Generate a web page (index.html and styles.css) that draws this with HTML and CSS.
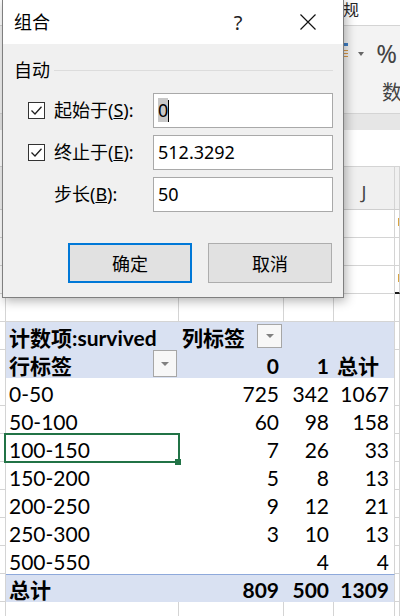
FILE: index.html
```html
<!DOCTYPE html>
<html lang="zh-CN">
<head>
<meta charset="utf-8">
<title>组合</title>
<link rel="stylesheet" href="styles.css">
</head>
<body>
<div class="app">
  <div class="numfmt-bar"><span class="numfmt">常规</span></div>
  <div class="ribbon">
    <div class="tools">
      <span class="acc-icon"></span>
      <span class="drop-arrow"></span>
      <span class="pct">%</span>
    </div>
    <div class="group-label">数字</div>
  </div>
  <div class="ribbon-gap"></div>
  <div class="fbar"></div>
  <div class="colheads">
    <div class="ch"></div><div class="ch"></div><div class="ch"></div><div class="ch"></div><div class="ch">J</div><div class="ch"></div>
  </div>

  <div class="sheet">
    <div class="row"><div class="c"></div><div class="c"></div><div class="c"></div><div class="c"></div><div class="c"></div><div class="c"><span class="om"></span></div></div>
    <div class="row"><div class="c"></div><div class="c"></div><div class="c"></div><div class="c"></div><div class="c"></div><div class="c"></div></div>
    <div class="row"><div class="c"></div><div class="c"></div><div class="c"></div><div class="c"></div><div class="c"></div><div class="c thick"><span class="om"></span></div></div>
    <div class="row"><div class="c"></div><div class="c"></div><div class="c"></div><div class="c"></div><div class="c"></div><div class="c"></div></div>

    <div class="row">
      <div class="c"></div>
      <div class="p blue b">计数项:survived</div>
      <div class="p blue b flt"><span>列标签</span><span class="fb"></span></div>
      <div class="p blue"></div>
      <div class="p blue d"></div>
      <div class="c"></div>
    </div>
    <div class="row">
      <div class="c"></div>
      <div class="p blue b hb flt"><span>行标签</span><span class="fb tall"></span></div>
      <div class="p blue b hb num">0</div>
      <div class="p blue b hb num">1</div>
      <div class="p blue b hb d">总计</div>
      <div class="c"></div>
    </div>
    <div class="row"><div class="c"></div><div class="p">0-50</div><div class="p num">725</div><div class="p num">342</div><div class="p num d">1067</div><div class="c"></div></div>
    <div class="row"><div class="c"></div><div class="p">50-100</div><div class="p num">60</div><div class="p num">98</div><div class="p num d">158</div><div class="c"></div></div>
    <div class="row"><div class="c"></div><div class="p sel">100-150</div><div class="p num">7</div><div class="p num">26</div><div class="p num d">33</div><div class="c"></div></div>
    <div class="row"><div class="c"></div><div class="p">150-200</div><div class="p num">5</div><div class="p num">8</div><div class="p num d">13</div><div class="c"></div></div>
    <div class="row"><div class="c"></div><div class="p">200-250</div><div class="p num">9</div><div class="p num">12</div><div class="p num d">21</div><div class="c"></div></div>
    <div class="row"><div class="c"></div><div class="p">250-300</div><div class="p num">3</div><div class="p num">10</div><div class="p num d">13</div><div class="c"></div></div>
    <div class="row"><div class="c"></div><div class="p">500-550</div><div class="p num"></div><div class="p num">4</div><div class="p num d">4</div><div class="c"></div></div>
    <div class="row">
      <div class="c"></div>
      <div class="p blue b tt">总计</div>
      <div class="p blue b tt num">809</div>
      <div class="p blue b tt num">500</div>
      <div class="p blue b tt num d">1309</div>
      <div class="c"></div>
    </div>
    <div class="row"><div class="c"></div><div class="c"></div><div class="c"></div><div class="c"></div><div class="c"></div><div class="c"></div></div>
  </div>

  <div class="dlg">
    <div class="dlg-title">
      <span class="dlg-name">组合</span>
      <span class="dlg-help">?</span>
      <span class="dlg-close"><svg width="16" height="16" viewBox="0 0 16 16"><path d="M0.5 0.5 L15.5 15.5 M15.5 0.5 L0.5 15.5" stroke="#111" stroke-width="1.2" fill="none"/></svg></span>
    </div>
    <div class="dlg-body">
      <div class="grp"><span>自动</span><i class="grp-line"></i></div>
      <div class="frow first">
        <div class="flabel"><span class="cb"><svg width="15" height="15" viewBox="0 0 15 15"><path d="M2.5 7.5 L6 11 L12.5 3.8" fill="none" stroke="#1f1f1f" stroke-width="1.3"/></svg></span><span>起始于(<u>S</u>):</span></div>
        <div class="inp"><span class="hl">0</span><span class="caret"></span></div>
      </div>
      <div class="frow">
        <div class="flabel"><span class="cb"><svg width="15" height="15" viewBox="0 0 15 15"><path d="M2.5 7.5 L6 11 L12.5 3.8" fill="none" stroke="#1f1f1f" stroke-width="1.3"/></svg></span><span>终止于(<u>E</u>):</span></div>
        <div class="inp">512.3292</div>
      </div>
      <div class="frow">
        <div class="flabel noc"><span>步长(<u>B</u>):</span></div>
        <div class="inp">50</div>
      </div>
      <div class="btns">
        <button class="btn primary">确定</button>
        <button class="btn">取消</button>
      </div>
    </div>
  </div>
</div>
</body>
</html>
```
FILE: styles.css
```css
* { box-sizing: border-box; margin: 0; padding: 0; }
html, body { width: 400px; height: 616px; overflow: hidden; background: #fff; }
body { font-family: "Noto Sans", "Noto Sans CJK SC", sans-serif; color: #000; }
.app { position: relative; width: 400px; height: 616px; overflow: hidden; }

/* ribbon */
.numfmt-bar { height: 26px; background: #fff; border-bottom: 1px solid #d4d4d4; display: flex; justify-content: flex-end; padding-right: 41px; }
.numfmt { font: 16px/18px "Noto Sans CJK SC", sans-serif; color: #262626; }
.ribbon { height: 88px; background: #f3f3f3; border-bottom: 1px solid #d4d4d4; display: flex; flex-direction: column; }
.tools { height: 30px; margin-top: 12px; display: flex; justify-content: flex-end; align-items: center; padding-right: 3px; }
.acc-icon { width: 5px; height: 17px; margin-right: 10px; margin-top: -3px; background: linear-gradient(#3f7fc6 0 3px, transparent 3px 7px, #d99a4a 7px 8px, transparent 8px 10px, #d99a4a 10px 11px, transparent 11px 13px, #d99a4a 13px 14px, transparent 14px); }
.drop-arrow { width: 0; height: 0; border-left: 3px solid transparent; border-right: 3px solid transparent; border-top: 4px solid #666; margin-right: 12px; margin-top: 2px; }
.pct { font: 25px/25px "Noto Sans", sans-serif; color: #444; }
.group-label { margin-top: 12px; padding-left: 382px; font: 20px/24px "Noto Sans CJK SC", sans-serif; color: #444; white-space: nowrap; }
.ribbon-gap { height: 16px; background: #e6e6e6; }
.fbar { height: 37px; background: #fff; border-bottom: 1px solid #d4d4d4; }

/* grid */
.colheads, .row { display: grid; grid-template-columns: 6px 173px 105px 50px 61px 1fr; }
.colheads { height: 43px; background: #f0f0f0; border-bottom: 1px solid #cfcfcf; }
.ch { border-right: 1px solid #d4d4d4; text-align: center; font-size: 18px; line-height: 26px; padding-top: 12px; color: #444; overflow: hidden; }
.row { height: 28px; }
.c { border-right: 1px solid #d4d4d4; border-bottom: 1px solid #d4d4d4; background: #fff; overflow: hidden; }
.c.thick { border-bottom: 2px solid #1a1a1a; }
.om { display: block; width: 2px; height: 8px; margin: 8px 0 0 3px; background: #d9a441; }

/* pivot */
.p { background: #fff; font-family: "Lato", "Noto Sans CJK SC", sans-serif; font-size: 21px; line-height: 24px; padding: 4px 5px 0 3px; white-space: nowrap; }
.p.d { border-right: 1px solid #d4d4d4; }
.num { text-align: right; }
.blue { background: #d9e1f2; }
.b { font-weight: 700; }
.hb { border-bottom: 1px solid #8ea9db; }
.tt { border-top: 1px solid #8ea9db; padding-top: 3px; }
.flt { display: flex; justify-content: space-between; align-items: flex-start; padding-right: 2px; }
.fb { width: 25px; height: 24px; margin-top: -2px; background: #f7f7f7; border: 1px solid #a6a6a6; display: flex; align-items: center; justify-content: center; }
.fb::after { content: ""; border-left: 4px solid transparent; border-right: 4px solid transparent; border-top: 4px solid #808080; }
.fb.tall { width: 24px; height: 27px; margin-top: -4px; }
.sel { position: relative; }
.sel::before { content: ""; position: absolute; left: -2px; top: -1px; right: -1px; bottom: -1px; border: 2px solid #217346; }
.sel::after { content: ""; position: absolute; right: -2px; bottom: -3px; width: 6px; height: 6px; background: #217346; }

/* dialog */
.dlg { position: absolute; left: 2px; top: -1px; width: 342px; height: 299px; background: #f0f0f0; border: 1px solid #7f7f7f; box-shadow: 2px 3px 10px rgba(0,0,0,0.3); z-index: 10; font-size: 18px; }
.dlg-title { height: 44px; background: #fff; display: flex; }
.dlg-name { flex: 1; line-height: 44px; padding-left: 11px; }
.dlg-help, .dlg-close { width: 70px; display: flex; align-items: center; justify-content: center; }
.dlg-help { font-size: 20px; color: #222; }
.grp { height: 24px; margin-top: 14px; display: flex; align-items: center; padding: 0 10px 0 11px; line-height: 24px; }
.grp-line { flex: 1; height: 1px; background: #dcdcdc; margin-left: 4px; }
.frow { display: grid; grid-template-columns: 125px 180px; height: 35px; margin-left: 25px; margin-top: 7px; }
.frow.first { margin-top: 11px; }
.flabel { display: flex; align-items: center; gap: 9px; line-height: 35px; white-space: nowrap; }
.flabel.noc { padding-left: 26px; }
.cb { width: 17px; height: 17px; border: 1px solid #333; background: #fff; display: flex; }
.inp { border: 1px solid #a9a9a9; background: #fff; line-height: 33px; padding-left: 4px; white-space: nowrap; }
.hl { background: #c8c8c8; }
.caret { display: inline-block; width: 1px; height: 22px; background: #000; vertical-align: -5px; }
.btns { display: flex; justify-content: flex-end; gap: 16px; margin-top: 31px; padding-right: 11px; }
.btn { width: 124px; height: 40px; background: #e1e1e1; border: 1px solid #adadad; font-family: inherit; font-size: 18px; color: #000; display: flex; align-items: center; justify-content: center; }
.btn.primary { border: 2px solid #0078d7; }
```
